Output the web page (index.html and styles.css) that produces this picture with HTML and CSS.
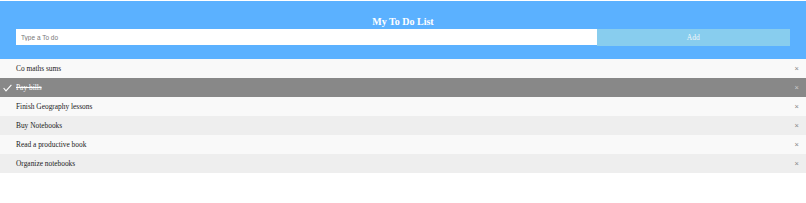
FILE: index.html
```html
<!DOCTYPE html>
<html>
<head>
<meta charset="utf-8">
<link rel="stylesheet" href="styles.css">
</head>
<body>
<div class="header">
  <h2 class="title">My To Do List</h2>
  <div class="form">
    <input class="todo-input" type="text" placeholder="Type a To do">
    <span class="add-btn">Add</span>
  </div>
</div>
<ul class="list">
  <li class="item"><span class="mark"></span><span class="text">Co maths sums</span><span class="close">×</span></li>
  <li class="item checked"><span class="mark"><svg width="9" height="8" viewBox="0 0 9 8"><polyline points="0.6,4 3,6.8 8.4,0.8" fill="none" stroke="#fff" stroke-width="1.1"/></svg></span><span class="text">Pay bills</span><span class="close">×</span></li>
  <li class="item"><span class="mark"></span><span class="text">Finish Geography lessons</span><span class="close">×</span></li>
  <li class="item"><span class="mark"></span><span class="text">Buy Notebooks</span><span class="close">×</span></li>
  <li class="item"><span class="mark"></span><span class="text">Read a productive book</span><span class="close">×</span></li>
  <li class="item"><span class="mark"></span><span class="text">Organize notebooks</span><span class="close">×</span></li>
</ul>
</body>
</html>
```

FILE: styles.css
```css
html, body {
  margin: 0;
  padding: 0;
  background: #fff;
  font-family: "Liberation Serif", "Times New Roman", serif;
}

.header {
  margin-top: 1px;
  background: #5bb1ff;
  padding: 14px 16px 13px 16px;
  text-align: center;
}

.title {
  margin: 0 0 1px 0;
  color: #fff;
  font-size: 10px;
  line-height: 13px;
  font-weight: bold;
}

.form {
  display: flex;
  align-items: flex-start;
}

.todo-input {
  flex: 0 0 75%;
  box-sizing: border-box;
  height: 16px;
  border: none;
  margin: 0;
  padding: 0 5px;
  font-family: "Liberation Sans", Arial, sans-serif;
  font-size: 6.5px;
  background: #fff;
  outline: none;
}

.todo-input::placeholder {
  color: #777;
}

.add-btn {
  flex: 1 1 auto;
  height: 17px;
  line-height: 17px;
  background: #88cdee;
  color: #f2f6f8;
  font-size: 7.5px;
  text-align: center;
}

.list {
  list-style: none;
  margin: 0;
  padding: 0;
}

.item {
  display: grid;
  grid-template-columns: 16px 1fr auto;
  align-items: center;
  height: 19px;
  padding-right: 7px;
  background: #f9f9f9;
  color: #222;
  font-size: 7.4px;
}

.item:nth-child(even) {
  background: #eee;
}

.item.checked {
  background: #888;
  color: #fff;
}

.item.checked .text {
  text-decoration: line-through;
}

.mark {
  display: flex;
  justify-content: center;
  align-items: center;
  padding-right: 2px;
}

.mark svg {
  display: block;
}

.close {
  color: #888;
  font-family: "Liberation Sans", Arial, sans-serif;
  font-size: 7.5px;
}

.item.checked .close {
  color: #ccc;
}
```
